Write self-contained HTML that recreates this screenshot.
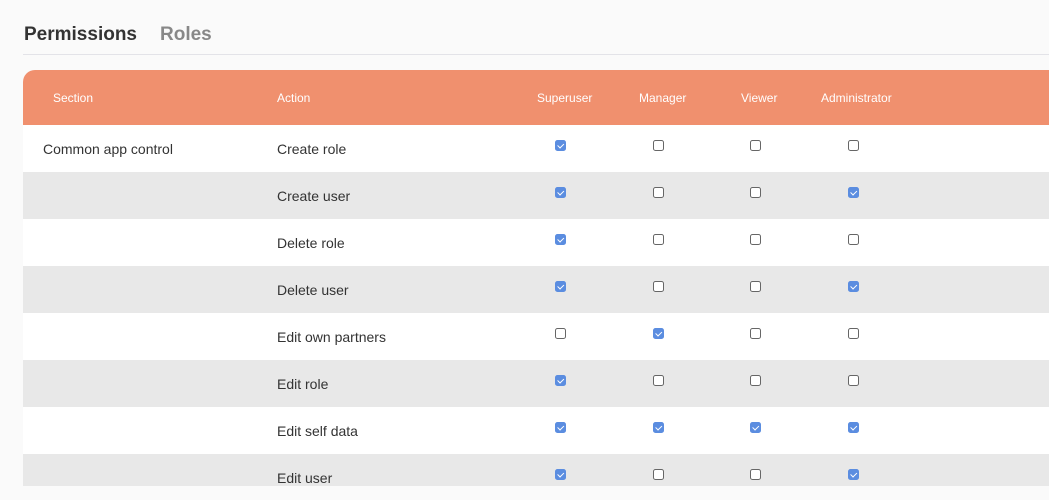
<!DOCTYPE html>
<html><head><style>
body{margin:0;width:1049px;height:500px;background:#fafafa;font-family:"Liberation Sans",sans-serif;overflow:hidden;position:relative}
.tab{position:absolute;top:24px;font-size:19px;font-weight:bold}
.line{position:absolute;left:23px;right:0;top:54px;height:1px;background:#e3e3e8}
.tbl{position:absolute;left:23px;top:70px;width:1040px;height:416px;overflow:hidden;border-top-left-radius:12px;background:#fff}
.hd{height:55px;background:#f0906e;position:relative;color:#fff;font-size:12px}
.hd span{position:absolute;top:21px}
.row{height:47px;position:relative;font-size:14px;color:#333}
.row:nth-child(even){background:#e8e8e8}
.row span{position:absolute;top:16px}
.cb{position:absolute;top:15px;width:9px;height:9px;border:1.3px solid #666;border-radius:2.5px;background:#fff}
.cb.on{background:#5b8de0;border-color:#5b8de0}
.cb.on::after{content:"";position:absolute;left:3px;top:1px;width:2.5px;height:4.5px;border:solid #fff;border-width:0 1.2px 1.2px 0;transform:rotate(45deg)}
</style></head><body>
<div class="tab" style="left:24px;color:#333">Permissions</div>
<div class="tab" style="left:160px;color:#888">Roles</div>
<div class="line"></div>
<div class="tbl">
<div class="hd"><span style="left:30px">Section</span><span style="left:254px">Action</span><span style="left:514px">Superuser</span><span style="left:616px">Manager</span><span style="left:718px">Viewer</span><span style="left:798px">Administrator</span></div>
<div id="rows"></div>
</div>
<script>
var d=[["Common app control","Create role",1,0,0,0],["","Create user",1,0,0,1],["","Delete role",1,0,0,0],["","Delete user",1,0,0,1],["","Edit own partners",0,1,0,0],["","Edit role",1,0,0,0],["","Edit self data",1,1,1,1],["","Edit user",1,0,0,1]];
var xs=[532,630,727,825],h="";
d.forEach(function(r){h+='<div class="row"><span style="left:20px">'+r[0]+'</span><span style="left:254px">'+r[1]+'</span>';for(var i=0;i<4;i++)h+='<div class="cb'+(r[i+2]?' on':'')+'" style="left:'+xs[i]+'px"></div>';h+='</div>';});
document.getElementById('rows').innerHTML=h;
</script>
</body></html>
